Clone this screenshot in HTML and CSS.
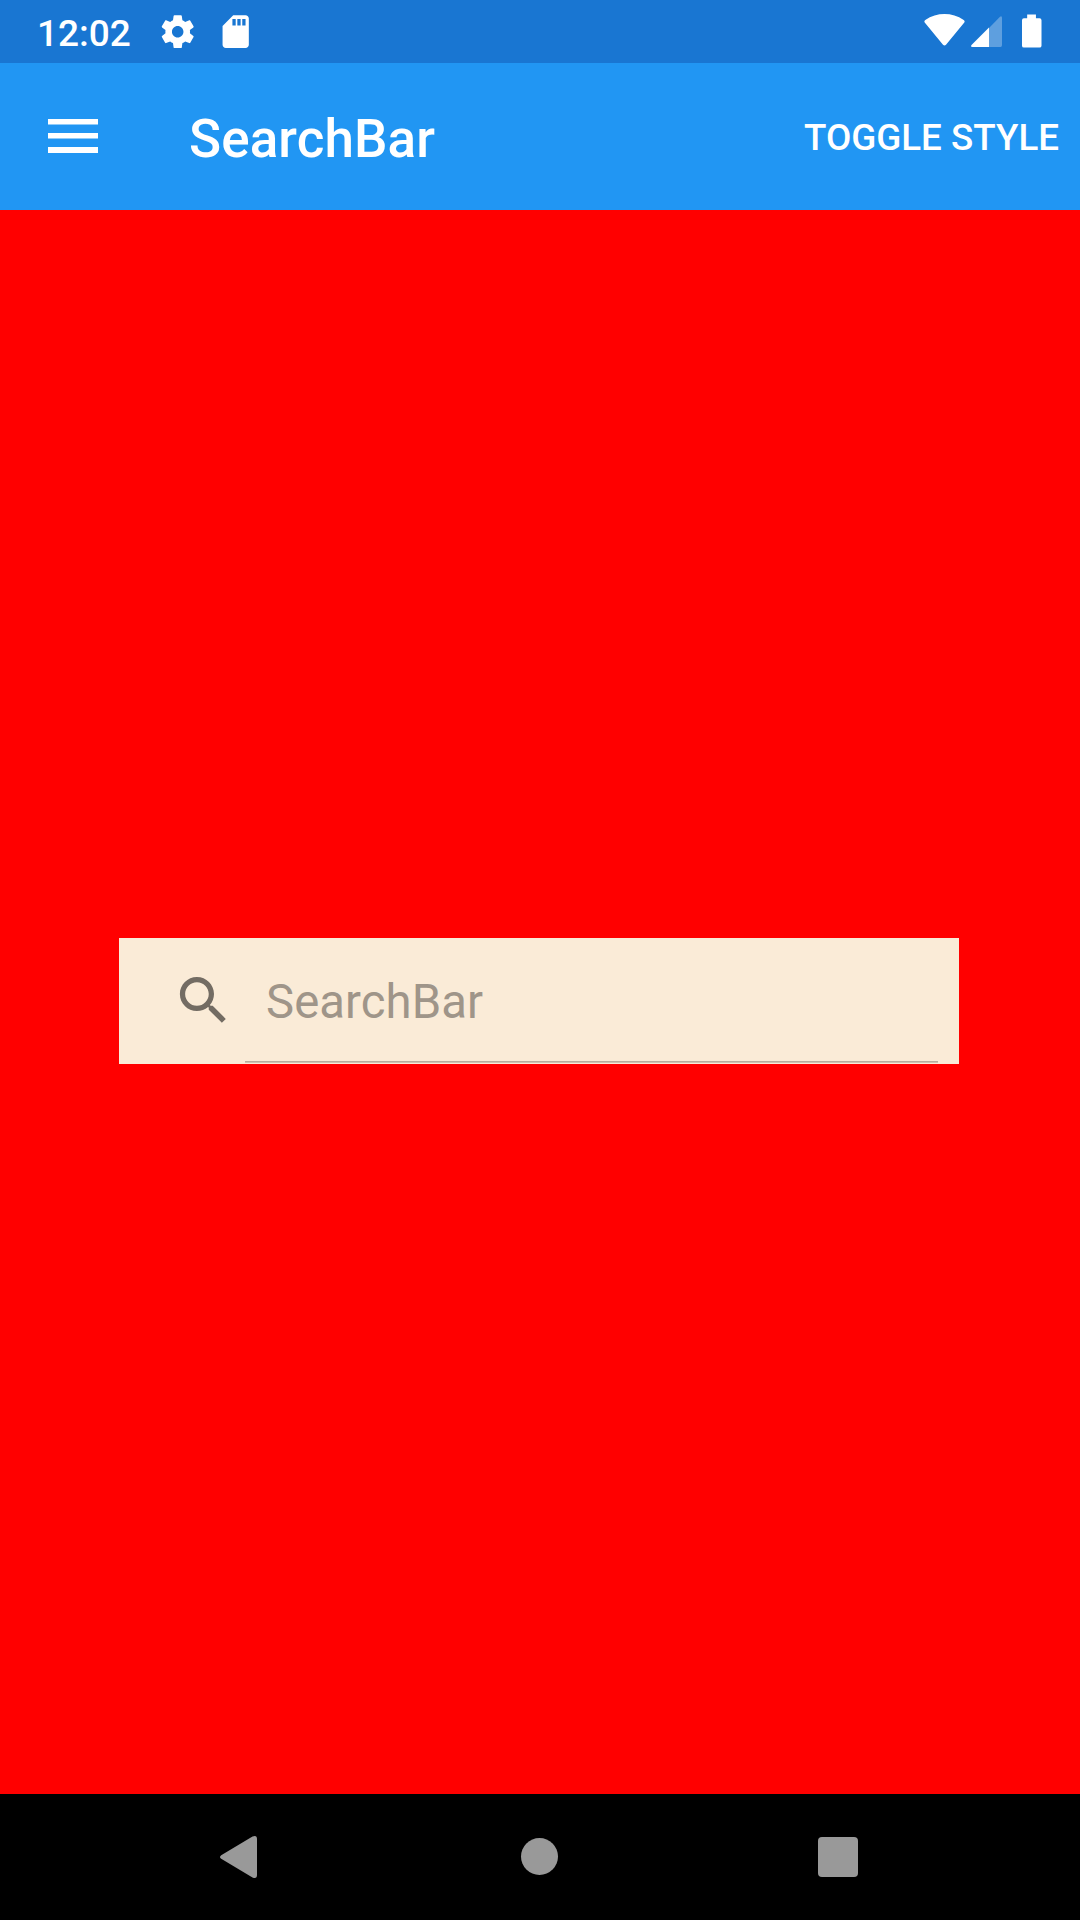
FILE: index.html
```html
<!DOCTYPE html>
<html lang="en">
<head>
<meta charset="utf-8">
<title>SearchBar</title>
<link rel="stylesheet" href="styles.css">
</head>
<body>
<div class="screen">
  <div class="status-bar">
    <span class="clock">12:02</span>
    <svg class="gear" viewBox="0 0 24 24"><path d="M19.43 12.98c.04-.32.07-.64.07-.98s-.03-.66-.07-.98l2.11-1.65c.19-.15.24-.42.12-.64l-2-3.46c-.12-.22-.39-.3-.61-.22l-2.49 1c-.52-.4-1.08-.73-1.69-.98l-.38-2.65C14.46 2.18 14.25 2 14 2h-4c-.25 0-.46.18-.49.42l-.38 2.65c-.61.25-1.17.59-1.69.98l-2.49-1c-.23-.09-.49 0-.61.22l-2 3.46c-.13.22-.07.49.12.64l2.11 1.65c-.04.32-.07.65-.07.98s.03.66.07.98l-2.11 1.65c-.19.15-.24.42-.12.64l2 3.46c.12.22.39.3.61.22l2.49-1c.52.4 1.08.73 1.69.98l.38 2.65c.03.24.24.42.49.42h4c.25 0 .46-.18.49-.42l.38-2.65c.61-.25 1.17-.59 1.69-.98l2.49 1c.23.09.49 0 .61-.22l2-3.46c.12-.22.07-.49-.12-.64l-2.11-1.65zM12 15.5c-1.93 0-3.5-1.57-3.5-3.5s1.57-3.5 3.5-3.5 3.5 1.57 3.5 3.5-1.57 3.5-3.5 3.5z"/></svg>
    <svg class="sd-card" viewBox="0 0 24 24"><path d="M18 2h-7.500L4 8.500V20c0 1.100.9 2 2 2h12c1.100 0 2-.9 2-2V4c0-1.100-.9-2-2-2zm-6 6.200h-2V4.200h2zm3 0h-2V4.200h2zm3 0h-2V4.200h2z"/></svg>
    <div class="status-right">
      <svg class="wifi" viewBox="0 0 41 32"><path d="M.7 8.500Q-.2 7 1.300 6C13-1.900 28-1.900 39.700 6q1.500 1 .6 2.500L22 30.800q-1.500 1.500-3 0z"/></svg>
      <svg class="signal" viewBox="0 0 31 31"><path opacity=".3" d="M18 12 29 .700Q31-.7 31 2v27q0 2-1.500 2H18z"/><path d="M18 11.500V31H1.500Q-.8 31 .5 29z"/></svg>
      <svg class="battery" viewBox="0 0 20 34"><path d="M5.300 0h9v4h3.700q2 0 2 2v26q0 2-2 2H2q-2 0-2-2V6q0-2 2-2h3.300z"/></svg>
    </div>
  </div>
  <header class="app-bar">
    <svg class="menu" viewBox="0 0 50 34"><path d="M0 0h50v5.500H0zM0 14h50v5.500H0zM0 28h50v6H0z"/></svg>
    <h1 class="title">SearchBar</h1>
    <span class="action">TOGGLE STYLE</span>
  </header>
  <main class="content">
    <div class="search-bar">
      <svg class="search-icon" viewBox="0 0 24 24"><path d="M15.500 14h-.79l-.28-.27C15.410 12.590 16 11.110 16 9.500 16 5.910 13.090 3 9.500 3S3 5.910 3 9.500 5.910 16 9.500 16c1.610 0 3.090-.59 4.230-1.570l.27.28v.79l5 4.990L20.490 19l-4.990-5zm-6 0C7.010 14 5 11.990 5 9.500S7.010 5 9.500 5 14 7.010 14 9.500 11.990 14 9.500 14z"/></svg>
      <div class="field"><span class="placeholder">SearchBar</span></div>
    </div>
  </main>
  <nav class="nav-bar">
    <svg class="back" viewBox="0 0 37 42"><path d="M1.200 19.200 32.500.600Q37-1.200 37 3v36q0 4.200-4.500 2.400L1.200 22.800q-2.400-1.800 0-3.600z"/></svg>
    <span class="home"></span>
    <span class="recents"></span>
  </nav>
</div>
</body>
</html>
```
FILE: styles.css
```css
body {
  margin: 0;
  font-family: Roboto, sans-serif;
}

svg {
  display: block;
  flex: none;
  fill: #fff;
}

.screen {
  display: flex;
  flex-direction: column;
  width: 1080px;
  height: 1920px;
  overflow: hidden;
  background: #f00;
}

.status-bar {
  display: flex;
  align-items: flex-start;
  box-sizing: border-box;
  height: 63px;
  padding: 0 38.5px 0 37px;
  background: #1976d2;
  color: #fff;
}

.clock {
  width: 121.300px;
  padding-top: 12px;
  font-size: 37px;
  font-weight: 500;
  line-height: 43px;
}

.gear,
.sd-card {
  width: 39.400px;
  height: 39.400px;
  margin-top: 12px;
}

.sd-card {
  margin-left: 18.600px;
}

.status-right {
  display: flex;
  margin-left: auto;
}

.wifi {
  width: 41px;
  height: 32px;
  margin-top: 14px;
}

.signal {
  width: 31px;
  height: 31px;
  margin: 16px 20px 0 6px;
}

.battery {
  width: 19.500px;
  height: 34px;
  margin-top: 14px;
}

.app-bar {
  display: flex;
  align-items: center;
  box-sizing: border-box;
  height: 147px;
  padding: 0 21px 0 48px;
  background: #2196f3;
  color: #fff;
}

.menu {
  width: 50px;
  height: 34px;
  margin-bottom: 1px;
}

.title {
  margin: 5px 0 0 91px;
  font-size: 53px;
  font-weight: 500;
  line-height: 62px;
  letter-spacing: 0.1px;
}

.action {
  margin-left: auto;
  padding-top: 1px;
  font-size: 36.750px;
  font-weight: 500;
  line-height: 43px;
}

.content {
  flex: 1;
  padding: 728px 121px 0 119px;
}

.search-bar {
  display: flex;
  box-sizing: border-box;
  height: 126px;
  padding: 0 21px 0 53px;
  background: #faebd7;
}

.search-icon {
  width: 63px;
  height: 63px;
  margin-top: 31px;
  fill: #736c63;
}

.field {
  flex: 1;
  box-sizing: border-box;
  height: 124px;
  margin-left: 10px;
  padding: 36px 0 0 21px;
  border-bottom: 1px solid #b8ad9e;
  box-shadow: 0 1px #cfc3b2;
}

.placeholder {
  display: block;
  font-size: 47.250px;
  line-height: 56px;
  letter-spacing: 0.1px;
  color: #9f9589;
}

.nav-bar {
  display: flex;
  align-items: center;
  box-sizing: border-box;
  height: 126px;
  padding-left: 220px;
  background: #000;
}

.back {
  width: 37px;
  height: 42px;
  fill: #999;
}

.home {
  width: 37px;
  height: 37px;
  margin-left: 264px;
  margin-bottom: 1px;
  border-radius: 50%;
  background: #999;
}

.recents {
  width: 40px;
  height: 40px;
  margin-left: 260px;
  border-radius: 4px;
  background: #999;
}
```
